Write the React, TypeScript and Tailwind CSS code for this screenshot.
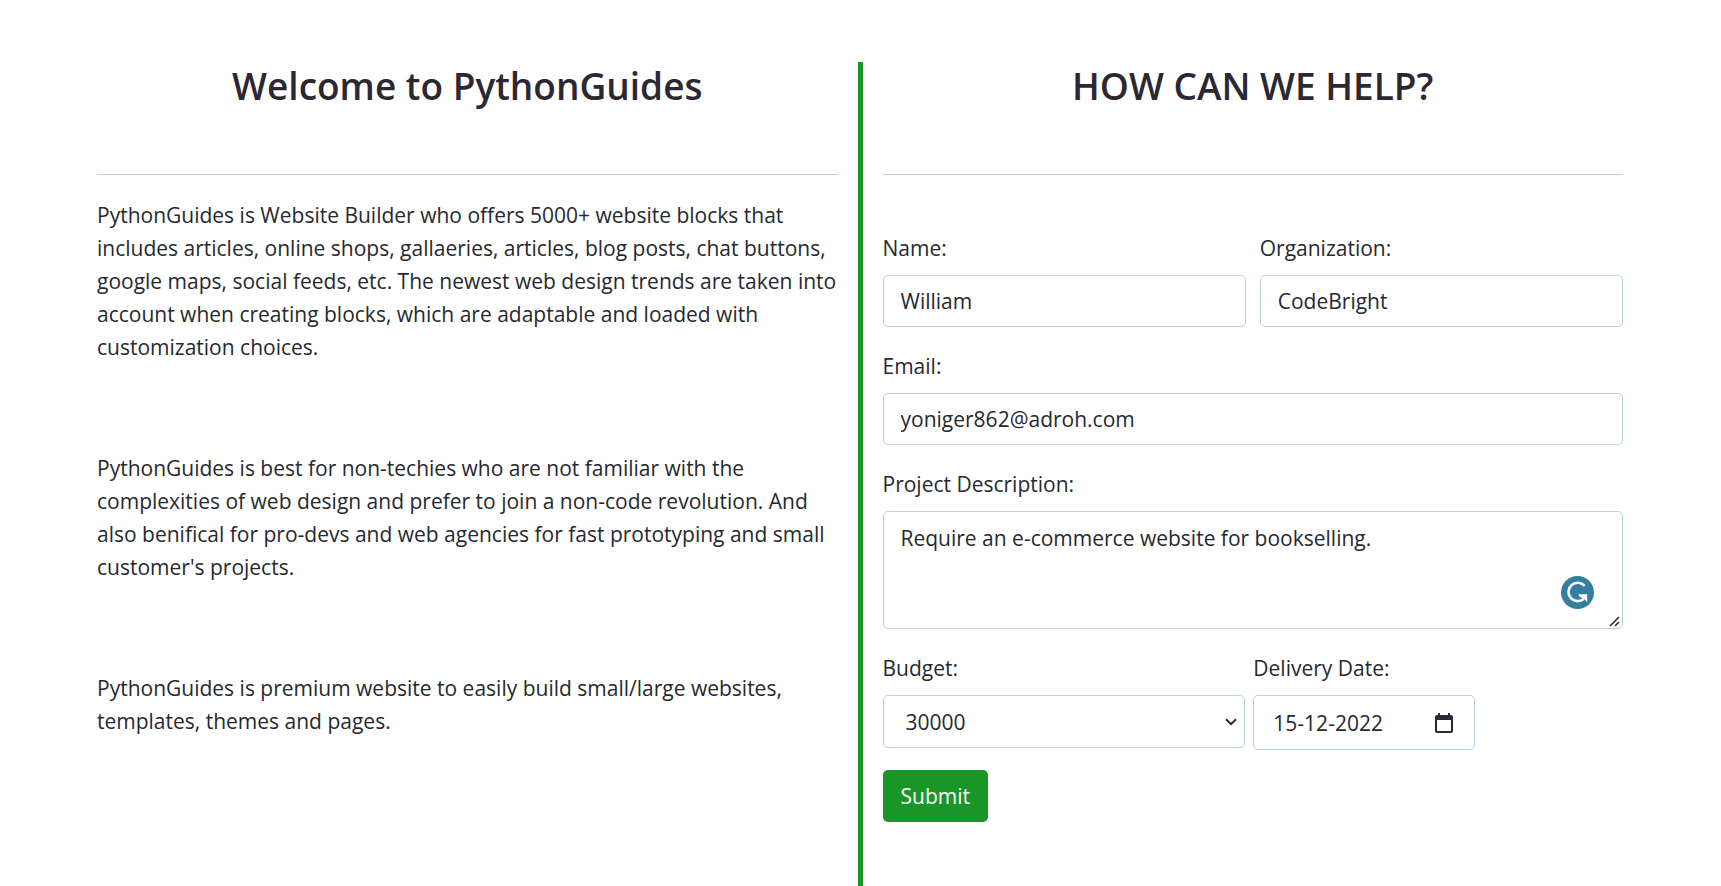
import { useState, type ReactNode } from "react";

const paragraphs = [
  "PythonGuides is Website Builder who offers 5000+ website blocks that includes articles, online shops, gallaeries, articles, blog posts, chat buttons, google maps, social feeds, etc. The newest web design trends are taken into account when creating blocks, which are adaptable and loaded with customization choices.",
  "PythonGuides is best for non-techies who are not familiar with the complexities of web design and prefer to join a non-code revolution. And also benifical for pro-devs and web agencies for fast prototyping and small customer's projects.",
  "PythonGuides is premium website to easily build small/large websites, templates, themes and pages.",
];

const control = "block w-full rounded-[5px] border border-[#b3d3e4] bg-white px-[17px]";

function Heading({ children }: { children: ReactNode }) {
  return (
    <h1 className="border-b border-[#b3d3e4] pb-16 text-center text-[37px] leading-[48px] font-semibold text-[#2b2833]">
      {children}
    </h1>
  );
}

function Field({ id, label, children }: { id: string; label: string; children: ReactNode }) {
  return (
    <div className="flex flex-col gap-[10px]">
      <label htmlFor={id}>{label}</label>
      {children}
    </div>
  );
}

function AssistantBadge() {
  return (
    <svg viewBox="0 0 33 33" className="size-[33px]" aria-hidden="true">
      <circle cx="16.5" cy="16.5" r="16.5" fill="#337fa0" />
      <path d="M23.6 9.9A9.2 9.2 0 1 0 22.6 23" fill="none" stroke="#fff" strokeWidth="2.6" />
      <path d="M17.5 18.3H26.2V26.2L23.6 23.6 18.3 20.6Z" fill="#fff" />
    </svg>
  );
}

function ResizeGrip() {
  return (
    <svg viewBox="0 0 11 11" className="size-[11px]" aria-hidden="true">
      <path d="M1 10 10 1M6 10l4-4" fill="none" stroke="#2b2833" strokeWidth="1.6" />
    </svg>
  );
}

function CalendarIcon() {
  return (
    <svg viewBox="0 0 18 20" className="h-5 w-[18px]" aria-hidden="true">
      <path
        d="M3 0h2v2h8V0h2v2h1a2 2 0 0 1 2 2v14a2 2 0 0 1-2 2H2a2 2 0 0 1-2-2V4a2 2 0 0 1 2-2h1ZM2 7v11h14V7Z"
        fill="#2b2833"
        fillRule="evenodd"
      />
    </svg>
  );
}

export default function App() {
  const [form, setForm] = useState({
    name: "William",
    organization: "CodeBright",
    email: "yoniger862@adroh.com",
    description: "Require an e-commerce website for bookselling.",
    budget: "30000",
    date: "15-12-2022",
  });
  const bind = (key: keyof typeof form) => ({
    id: key,
    value: form[key],
    onChange: (e: { target: { value: string } }) => setForm({ ...form, [key]: e.target.value }),
  });

  return (
    <main className="flex min-h-screen gap-5 bg-white pt-[62px] pr-[98px] pl-[97px] font-['Open_Sans','Noto_Sans',sans-serif] text-[21px] leading-[33px] text-[#26292e]">
      <section className="min-w-0 flex-1">
        <Heading>Welcome to PythonGuides</Heading>
        <div className="flex flex-col gap-[88px] pt-6">
          {paragraphs.map((text) => (
            <p key={text}>{text}</p>
          ))}
        </div>
      </section>

      <div className="w-[5px] shrink-0 bg-[#1a9629]" />

      <section className="min-w-0 flex-1 pb-12">
        <Heading>HOW CAN WE HELP?</Heading>
        <form className="flex flex-col gap-5 pt-[57px]" onSubmit={(e) => e.preventDefault()}>
          <div className="flex flex-col gap-[23px]">
            <div className="grid grid-cols-2 gap-[14px]">
              <Field id="name" label="Name:">
                <input {...bind("name")} type="text" className={`${control} h-[52px]`} />
              </Field>
              <Field id="organization" label="Organization:">
                <input {...bind("organization")} type="text" className={`${control} h-[52px]`} />
              </Field>
            </div>
            <Field id="email" label="Email:">
              <input {...bind("email")} type="email" className={`${control} h-[52px]`} />
            </Field>
            <Field id="description" label="Project Description:">
              <div className="relative">
                <textarea
                  {...bind("description")}
                  spellCheck={false}
                  className={`${control} h-[118px] resize-none py-[10px]`}
                />
                <div className="pointer-events-none absolute right-[29px] bottom-5">
                  <AssistantBadge />
                </div>
                <div className="pointer-events-none absolute right-[3px] bottom-[2px]">
                  <ResizeGrip />
                </div>
              </div>
            </Field>
            <div className="flex items-start gap-2">
              <div className="w-[49%]">
                <Field id="budget" label="Budget:">
                  <div className="relative">
                    <select {...bind("budget")} className={`${control} h-[53px] appearance-none pt-[2px] pl-[22px]`}>
                      <option>10000</option>
                      <option>20000</option>
                      <option>30000</option>
                    </select>
                    <svg
                      viewBox="0 0 12 8"
                      className="pointer-events-none absolute top-[23px] right-2 h-2 w-3"
                      aria-hidden="true"
                    >
                      <path d="M1 1.2 6 6.2 11 1.2" fill="none" stroke="#2b2833" strokeWidth="2" />
                    </svg>
                  </div>
                </Field>
              </div>
              <div className="w-[30%]">
                <Field id="date" label="Delivery Date:">
                  <div className="relative">
                    <input {...bind("date")} type="text" className={`${control} h-[55px] pl-[19px]`} />
                    <button
                      type="button"
                      aria-label="Pick a date"
                      className="absolute inset-y-0 right-[22px] flex items-center"
                    >
                      <CalendarIcon />
                    </button>
                  </div>
                </Field>
              </div>
            </div>
          </div>
          <button type="submit" className="h-[52px] self-start rounded-[5px] bg-[#1a9629] px-[18px] text-white">
            Submit
          </button>
        </form>
      </section>
    </main>
  );
}
